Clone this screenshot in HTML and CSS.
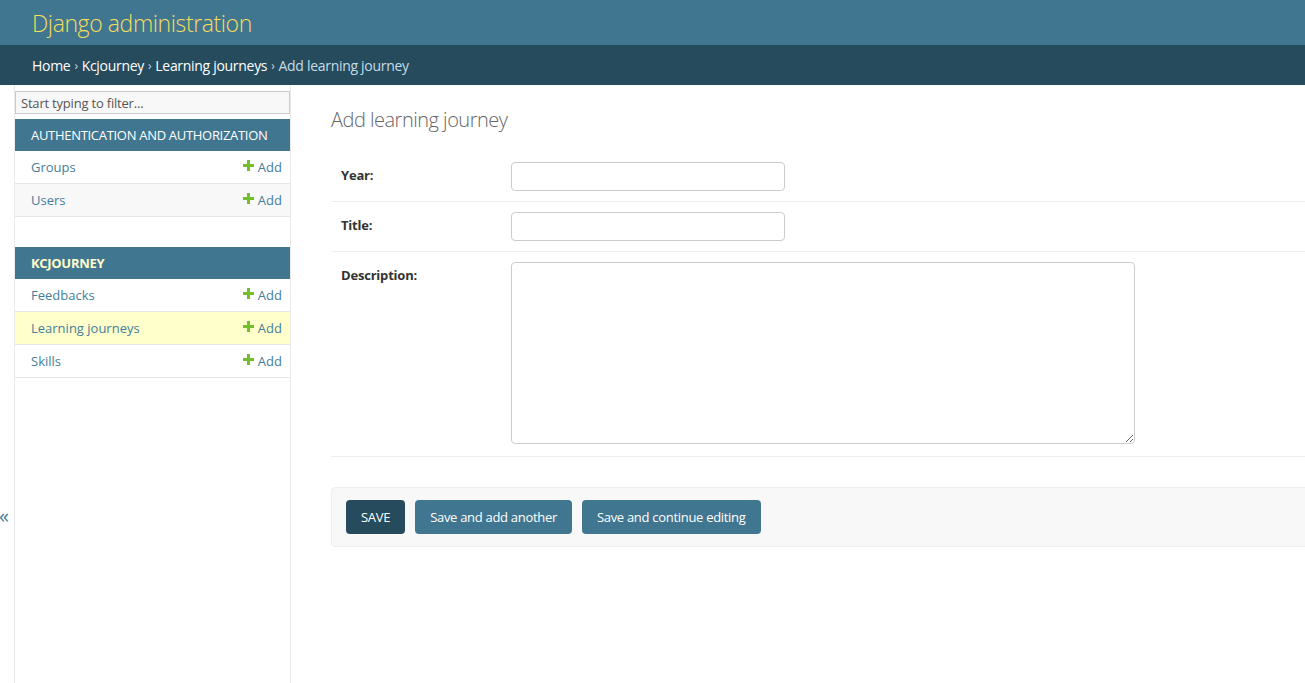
FILE: index.html
```html
<!DOCTYPE html>
<html lang="en">
<head>
<meta charset="utf-8">
<title>Add learning journey | Django site admin</title>
<link rel="stylesheet" href="styles.css">
</head>
<body>
<header class="header">
  <h1 class="branding">Django administration</h1>
</header>
<nav class="breadcrumbs">
  <a href="#">Home</a> <span class="sep">›</span> <a href="#">Kcjourney</a> <span class="sep">›</span> <a href="#">Learning journeys</a> <span class="sep">›</span> <span class="current">Add learning journey</span>
</nav>
<div class="main">
  <button class="toggle-nav" type="button" aria-label="Toggle navigation"><span class="toggle-glyph">«</span></button>
  <nav class="sidebar">
    <input class="nav-filter" type="search" placeholder="Start typing to filter...">
    <div class="module">
      <div class="caption">Authentication and Authorization</div>
      <div class="mrow">
        <a class="mname" href="#">Groups</a>
        <a class="addlink" href="#"><svg width="11" height="11" viewBox="0 0 11 11"><path d="M4 0h3v4h4v3H7v4H4V7H0V4h4z" fill="#70bf2b"/></svg>Add</a>
      </div>
      <div class="mrow alt">
        <a class="mname" href="#">Users</a>
        <a class="addlink" href="#"><svg width="11" height="11" viewBox="0 0 11 11"><path d="M4 0h3v4h4v3H7v4H4V7H0V4h4z" fill="#70bf2b"/></svg>Add</a>
      </div>
    </div>
    <div class="module">
      <div class="caption current-app">Kcjourney</div>
      <div class="mrow">
        <a class="mname" href="#">Feedbacks</a>
        <a class="addlink" href="#"><svg width="11" height="11" viewBox="0 0 11 11"><path d="M4 0h3v4h4v3H7v4H4V7H0V4h4z" fill="#70bf2b"/></svg>Add</a>
      </div>
      <div class="mrow selected">
        <a class="mname" href="#">Learning journeys</a>
        <a class="addlink" href="#"><svg width="11" height="11" viewBox="0 0 11 11"><path d="M4 0h3v4h4v3H7v4H4V7H0V4h4z" fill="#70bf2b"/></svg>Add</a>
      </div>
      <div class="mrow">
        <a class="mname" href="#">Skills</a>
        <a class="addlink" href="#"><svg width="11" height="11" viewBox="0 0 11 11"><path d="M4 0h3v4h4v3H7v4H4V7H0V4h4z" fill="#70bf2b"/></svg>Add</a>
      </div>
    </div>
  </nav>
  <div class="content">
    <h1 class="title">Add learning journey</h1>
    <form class="form">
      <div class="fieldset">
        <div class="form-row">
          <label class="flabel" for="year">Year:</label>
          <input class="vinput" id="year" type="text">
        </div>
        <div class="form-row">
          <label class="flabel" for="ttl">Title:</label>
          <input class="vinput" id="ttl" type="text">
        </div>
        <div class="form-row tall">
          <label class="flabel" for="desc">Description:</label>
          <textarea class="vtext" id="desc"></textarea>
        </div>
      </div>
      <div class="submit-row">
        <button type="button" class="btn default">SAVE</button>
        <button type="button" class="btn">Save and add another</button>
        <button type="button" class="btn">Save and continue editing</button>
      </div>
    </form>
  </div>
</div>
</body>
</html>
```
FILE: styles.css
```css
* { box-sizing: border-box; }
html, body { margin: 0; padding: 0; }
body {
  font-family: "Open Sans", "Noto Sans", Roboto, sans-serif;
  font-size: 14px;
  color: #333;
  background: #fff;
  overflow-x: hidden;
}
a { text-decoration: none; }

.header {
  height: 45px;
  background: #417690;
  display: flex;
  align-items: center;
  padding: 0 32px;
}
.branding {
  margin: 0;
  font-size: 23px;
  font-weight: 300;
  color: #f5dd5d;
  letter-spacing: -0.4px;
}

.breadcrumbs {
  height: 40px;
  background: #264b5d;
  color: #c4dce8;
  padding: 0 32px;
  display: flex;
  align-items: center;
  gap: 4px;
  font-size: 14px;
  letter-spacing: -0.3px;
  white-space: pre;
}
.breadcrumbs a { color: #fff; }
.breadcrumbs .sep { color: #c4dce8; font-size: 12px; }

.main {
  display: flex;
  min-height: 598px;
}
.toggle-nav {
  width: 15px;
  flex: none;
  border: 0;
  border-right: 1px solid #eaeaea;
  background: #fff;
  padding: 421px 0 0 0;
  margin: 0;
  display: flex;
  justify-content: flex-start;
  align-items: flex-start;
  color: #447e9b;
  font-family: inherit;
  font-size: 20px;
  line-height: 20px;
}
.toggle-glyph { display: block; margin-left: -1px; }

.sidebar {
  width: 276px;
  flex: none;
  border-right: 1px solid #eaeaea;
  padding-top: 6px;
}
.nav-filter {
  display: block;
  width: 100%;
  height: 23px;
  margin: 0 0 5px;
  padding: 2px 5px;
  border: 1px solid #ccc;
  background: #f8f8f8;
  font-family: inherit;
  font-size: 13px;
  letter-spacing: -0.2px;
  color: #333;
  -webkit-appearance: none;
  appearance: none;
}
.nav-filter::placeholder { color: #555; }
.module { margin-bottom: 30px; }
.caption {
  height: 32px;
  background: #417690;
  color: #fff;
  text-transform: uppercase;
  font-size: 13px;
  padding: 0 16px;
  display: flex;
  align-items: center;
  letter-spacing: -0.3px;
}
.caption.current-app { font-weight: 700; color: #ffc; }
.mrow {
  height: 33px;
  border-bottom: 1px solid #e8e8e8;
  display: flex;
  align-items: center;
  justify-content: space-between;
  padding: 0 8px 0 16px;
  font-size: 13px;
  background: #fff;
}
.mrow.alt { background: #f8f8f8; }
.mrow.selected { background: #ffc; }
.mname { color: #447e9b; }
.addlink {
  color: #447e9b;
  display: flex;
  align-items: center;
  gap: 4px;
}
.addlink svg { margin-top: -3px; }

.content {
  flex: 1;
  min-width: 0;
  padding: 20px 0 40px 40px;
}
.title {
  margin: 0 0 17px;
  font-size: 20px;
  font-weight: 300;
  color: #666;
  line-height: 30px;
  letter-spacing: -0.5px;
}
.form-row {
  display: flex;
  align-items: flex-start;
  padding: 10px;
  border-bottom: 1px solid #eee;
}
.form-row.tall { padding-bottom: 12px; }
.flabel {
  width: 170px;
  flex: none;
  padding: 4px 10px 0 0;
  font-weight: 700;
  font-size: 13px;
  color: #333;
  line-height: 18px;
  letter-spacing: -0.2px;
}
.vinput {
  width: 274px;
  height: 29px;
  border: 1px solid #ccc;
  border-radius: 4px;
  padding: 5px 6px;
  font-family: inherit;
  font-size: 14px;
  background: #fff;
}
.vtext {
  display: block;
  width: 624px;
  height: 182px;
  border: 1px solid #ccc;
  border-radius: 4px;
  padding: 5px 6px;
  font-family: inherit;
  font-size: 14px;
  resize: both;
}

.submit-row {
  margin: 30px -4px 0 0;
  padding: 12px 14px;
  background: #f8f8f8;
  border: 1px solid #eee;
  border-radius: 4px;
  display: flex;
  gap: 10px;
}
.btn {
  height: 34px;
  padding: 0 15px;
  border: 0;
  border-radius: 4px;
  background: #417690;
  color: #fff;
  font-family: inherit;
  font-size: 13px;
  letter-spacing: -0.3px;
}
.btn.default { background: #264b5d; }
```
